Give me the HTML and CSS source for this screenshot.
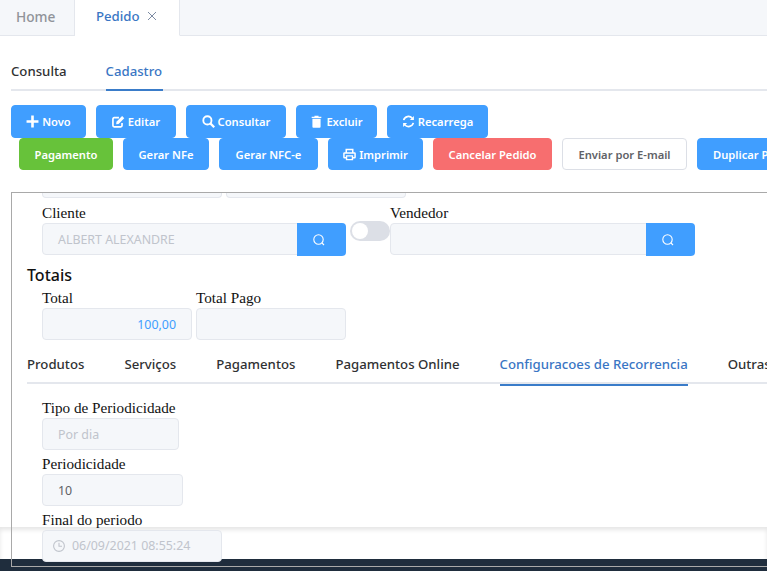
FILE: index.html
```html
<!DOCTYPE html>
<html lang="pt">
<head>
<meta charset="utf-8">
<title>Pedido</title>
<link rel="stylesheet" href="styles.css">
</head>
<body>
<nav class="page-tabs">
  <div class="page-tab">Home</div>
  <div class="page-tab active">Pedido
    <svg class="close" viewBox="0 0 10 10" width="10" height="10"><path d="M1 1l8 8M9 1l-8 8" fill="none" stroke="currentColor" stroke-width="1"/></svg>
  </div>
</nav>
<main class="content">
  <div class="sub-tabs">
    <div class="sub-tab">Consulta</div>
    <div class="sub-tab active">Cadastro</div>
  </div>
  <div class="btn-row first">
    <button class="btn w-novo"><svg class="ico" viewBox="0 0 12 12"><path d="M6 .5v11M.5 6h11" stroke="currentColor" stroke-width="2.400" fill="none"/></svg>Novo</button>
    <button class="btn w-editar"><svg class="ico" viewBox="0 0 14 14"><path d="M10.800 8.500v2.900a1.300 1.300 0 0 1-1.300 1.300H2.300A1.300 1.300 0 0 1 1 11.400V4.200a1.300 1.300 0 0 1 1.300-1.300H7.500" stroke="currentColor" stroke-width="1.800" fill="none"/><path d="M4.800 7.300 10.900 1.200l2.300 2.300L7.100 9.600l-2.600.3z" fill="currentColor"/></svg>Editar</button>
    <button class="btn w-consultar"><svg class="ico" viewBox="0 0 14 14"><circle cx="5.800" cy="5.800" r="4.400" stroke="currentColor" stroke-width="2" fill="none"/><path d="M9 9l4.200 4.200" stroke="currentColor" stroke-width="2.400"/></svg>Consultar</button>
    <button class="btn w-excluir"><svg class="ico" viewBox="0 0 12 14"><path d="M.8 1.800h3V.8h4.400v1h3v1.500H.8zM1.600 4h8.800v8.700a1 1 0 0 1-1 1H2.600a1 1 0 0 1-1-1z" fill="currentColor"/></svg>Excluir</button>
    <button class="btn w-recarrega"><svg class="ico" viewBox="0 0 14 14"><path d="M1.800 5.500A5.300 5.300 0 0 1 11 3.500M12.200 8.500A5.300 5.300 0 0 1 3 10.500" stroke="currentColor" stroke-width="1.800" fill="none"/><path d="M12.800 1v4.300H8.500zM1.200 13V8.700H5.500z" fill="currentColor"/></svg>Recarrega</button>
  </div>
  <div class="btn-row second">
    <button class="btn green w-pag">Pagamento</button>
    <button class="btn w-nfe">Gerar NFe</button>
    <button class="btn w-nfce">Gerar NFC-e</button>
    <button class="btn w-imp"><svg class="ico" viewBox="0 0 14 14"><path d="M3.500 5V1.500h7V5M3.500 10.500H1.500a.5.5 0 0 1-.5-.5V5.800a.5.5 0 0 1 .5-.5h11a.5.5 0 0 1 .5.5V10a.5.500 0 0 1-.5.5h-2" stroke="currentColor" stroke-width="1.600" fill="none"/><path d="M3.800 8.500h6.400v4H3.800z" stroke="currentColor" stroke-width="1.500" fill="none"/></svg>Imprimir</button>
    <button class="btn red w-can">Cancelar Pedido</button>
    <button class="btn plain w-env">Enviar por E-mail</button>
    <button class="btn w-dup">Duplicar Pedido</button>
  </div>
  <section class="panel">
    <div class="clipped">
      <div class="clip-a"></div>
      <div class="clip-b"></div>
    </div>
    <div class="party-row">
      <div class="field">
        <label class="lbl">Cliente</label>
        <div class="group">
          <div class="input w-cli muted">ALBERT ALEXANDRE</div>
          <div class="search"><svg viewBox="0 0 14 14" width="14" height="14"><circle cx="6.500" cy="6.500" r="4.700" stroke="currentColor" stroke-width="1.100" fill="none"/><path d="M10 10l2 2" stroke="currentColor" stroke-width="1.100"/></svg></div>
        </div>
      </div>
      <div class="switch"><span class="knob"></span></div>
      <div class="field">
        <label class="lbl">Vendedor</label>
        <div class="group">
          <div class="input w-ven"></div>
          <div class="search"><svg viewBox="0 0 14 14" width="14" height="14"><circle cx="6.500" cy="6.500" r="4.700" stroke="currentColor" stroke-width="1.100" fill="none"/><path d="M10 10l2 2" stroke="currentColor" stroke-width="1.100"/></svg></div>
        </div>
      </div>
    </div>
    <h3 class="heading">Totais</h3>
    <div class="totals">
      <div class="field">
        <label class="lbl">Total</label>
        <div class="input w-total num">100,00</div>
      </div>
      <div class="field">
        <label class="lbl">Total Pago</label>
        <div class="input w-total"></div>
      </div>
    </div>
    <div class="inner-tabs">
      <div class="inner-tab">Produtos</div>
      <div class="inner-tab">Serviços</div>
      <div class="inner-tab">Pagamentos</div>
      <div class="inner-tab">Pagamentos Online</div>
      <div class="inner-tab active">Configuracoes de Recorrencia</div>
      <div class="inner-tab">Outras</div>
    </div>
    <div class="stack">
      <div class="field">
        <label class="lbl">Tipo de Periodicidade</label>
        <div class="input w-tipo muted">Por dia</div>
      </div>
      <div class="field">
        <label class="lbl">Periodicidade</label>
        <div class="input w-per value">10</div>
      </div>
      <div class="field">
        <label class="lbl">Final do periodo</label>
        <div class="input w-fin muted date">
          <svg viewBox="0 0 12 12" width="12" height="12"><circle cx="6" cy="6" r="5.400" stroke="currentColor" stroke-width="1.100" fill="none"/><path d="M6 2.800v3.500h3" stroke="currentColor" stroke-width="1.100" fill="none"/></svg>
          06/09/2021 08:55:24
        </div>
      </div>
    </div>
  </section>
</main>
<footer class="footer"><div class="footer-bar"></div></footer>
</body>
</html>
```
FILE: styles.css
```css
* { box-sizing: border-box; }
html, body { margin: 0; padding: 0; width: 767px; height: 571px; overflow: hidden; background: #fff; }
body { position: relative; font-family: "Noto Sans", sans-serif; font-size: 13px; color: #303133; }

.page-tabs { display: flex; height: 36px; background: #f5f7fa; border-bottom: 1px solid #e4e7ed; }
.page-tab { display: flex; align-items: center; justify-content: flex-start; height: 36px; padding: 0 0 4px 16px; width: 75px; font-size: 13.700px; font-weight: 500; color: #909399; border-right: 1px solid #e4e7ed; }
.page-tab.active { width: 105px; padding-left: 21px; font-size: 13.200px; color: #3a76c4; background: #fff; border-bottom: 1px solid #fff; }
.close { margin-left: 7px; color: #7d8ba3; }

.content { padding: 0; position: relative; z-index: 1; }
.sub-tabs { display: flex; gap: 39px; margin: 18px 0 0 11px; height: 37px; border-bottom: 2px solid #e4e7ed; }
.sub-tab { height: 37px; line-height: 34px; font-size: 13.200px; color: #303133; font-weight: 500; }
.sub-tab.active { min-width: 57px; color: #3a76c4; border-bottom: 2px solid #3a7cc9; }

.btn-row { display: flex; flex-wrap: nowrap; gap: 10px; }
.first { margin: 14px 0 0 11px; height: 33px; }
.second { margin: 0 0 0 19px; height: 32px; }
.btn { flex: none; display: flex; align-items: center; justify-content: center; gap: 3px; height: 100%; padding: 0; border: 1px solid #409eff; border-radius: 4px; background: #409eff; color: #fff; font: 600 11.200px "Noto Sans", sans-serif; white-space: nowrap; }
.ico { width: 13px; height: 13px; flex: none; }
.green { background: #67c23a; border-color: #67c23a; }
.red { background: #f76e6f; border-color: #f76e6f; }
.plain { background: #fff; border-color: #dcdfe6; color: #606266; }
.w-novo { width: 75px; } .w-editar { width: 80px; } .w-consultar { width: 100px; } .w-excluir { width: 81px; } .w-recarrega { width: 101px; }
.w-pag { width: 94px; } .w-nfe { width: 86px; } .w-nfce { width: 99px; } .w-imp { width: 95px; } .w-can { width: 119px; } .w-env { width: 125px; } .w-dup { width: 110px; justify-content: flex-start; padding-left: 15px; }

.panel { position: relative; margin: 22px 0 0 11px; width: 820px; height: 375px; border: 1px solid #a9a9a9; overflow: hidden; padding: 0 0 0 15px; }
.clipped { display: flex; gap: 4px; height: 5px; margin-left: 15px; }
.clip-a, .clip-b { width: 180px; height: 5px; background: #f5f7fa; border: 1px solid #e4e7ed; border-top: 0; border-radius: 0 0 4px 4px; }

.lbl { display: block; height: 20px; font: 15.200px/20px "Liberation Serif", serif; color: #111; }
.party-row { display: flex; align-items: flex-start; margin: 5px 0 0 15px; height: 58px; }
.group { display: flex; align-items: flex-start; }
.input { height: 32px; line-height: 32px; padding-left: 15px; background: #f5f7fa; border: 1px solid #e4e7ed; border-radius: 4px; font-size: 12.400px; }
.muted { color: #c0c4cc; }
.value { color: #606266; }
.w-cli { width: 256px; border-radius: 4px 0 0 4px; }
.w-ven { width: 257px; border-radius: 4px 0 0 4px; }
.search { width: 49px; height: 33px; display: flex; align-items: center; justify-content: center; margin-left: -1px; padding-right: 5px; background: #409eff; color: #fff; border-radius: 0 4px 4px 0; }
.switch { position: relative; width: 40px; height: 20px; margin: 18px 0 0 4px; background: #dcdfe6; border-radius: 10px; }
.knob { position: absolute; left: 2px; top: 2px; width: 16px; height: 16px; background: #fff; border-radius: 50%; }
.heading { margin: 0; height: 27px; line-height: 28px; font-size: 16px; font-weight: 500; color: #111; }
.totals { display: flex; gap: 4px; margin-left: 15px; }
.w-total { width: 150px; }
.num { text-align: right; padding: 0 15px 0 0; color: #409eff; }
.inner-tabs { display: flex; gap: 40px; height: 44px; padding-top: 4px; border-bottom: 2px solid #e4e7ed; }
.inner-tab { height: 42px; line-height: 40px; font-size: 13.200px; font-weight: 500; color: #303133; white-space: nowrap; }
.inner-tab.active { color: #3a76c4; border-bottom: 2px solid #3a7cc9; }
.stack { display: flex; flex-direction: column; gap: 4px; margin: 14px 0 0 15px; }
.w-tipo { width: 137px; }
.w-per { width: 141px; }
.w-fin { width: 180px; display: flex; align-items: center; gap: 7px; padding-left: 10px; }

.footer { position: absolute; left: 0; right: 0; top: 527px; bottom: 0; background: #fff; box-shadow: inset 0 3px 4px rgba(0,0,0,.1); display: flex; flex-direction: column; justify-content: flex-end; }
.footer-bar { height: 12px; background: #1f2d3d; }
```
